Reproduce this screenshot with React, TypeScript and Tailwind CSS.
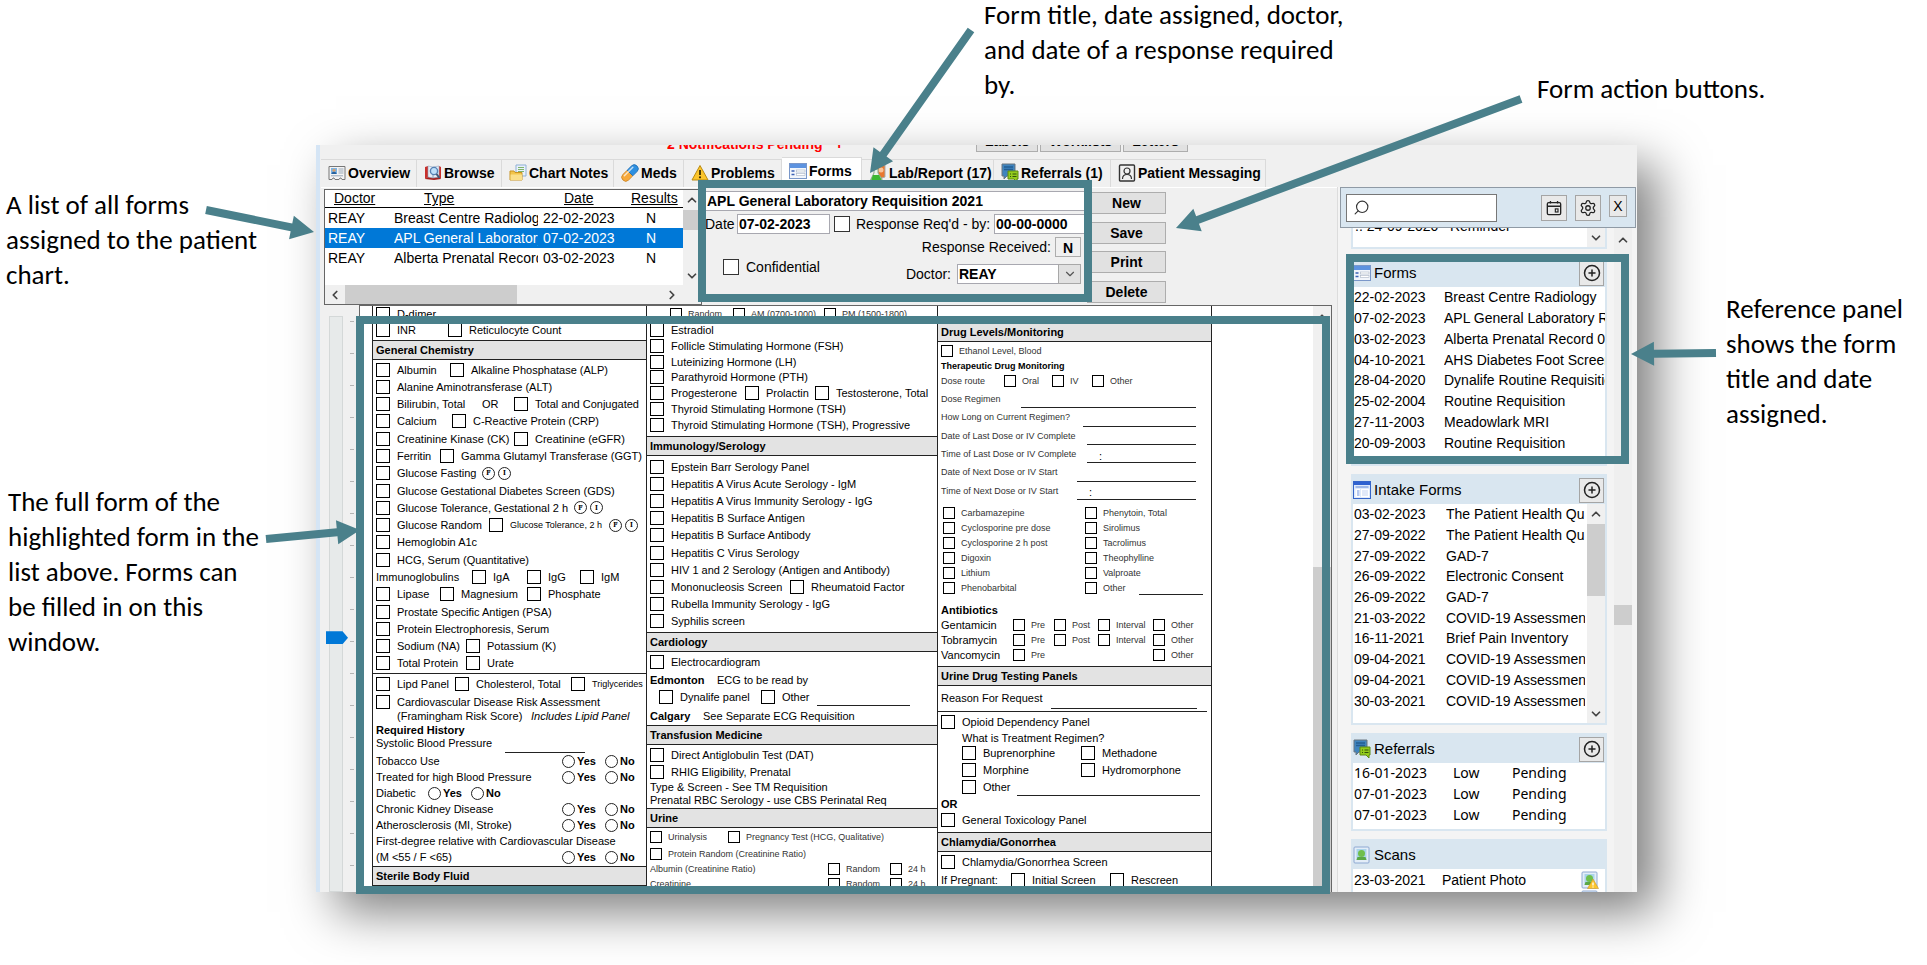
import type { ReactNode } from 'react';
import { ChevronDown, ChevronLeft, ChevronRight, ChevronUp, CirclePlus, Search, Settings } from 'lucide-react';
import clsx from 'clsx';

interface BoxProps {
  children: ReactNode;
  w?: string;
  small?: boolean;
}

/* ---------- icons ---------- */

function IconOverview() {
  return (
    <svg viewBox="0 0 18 18" className="size-[18px] shrink-0">
      <path d="M1 2.500h16v13h-3l-1-1.500h-1l-1 1.500h-4l-1-1.500h-1l-1 1.500h-3z" fill="#f4f4f4" stroke="#777" />
      <rect x="3" y="4" width="6" height="6" fill="#7db4e4" />
      <circle cx="6" cy="6.200" r="1.500" fill="#d99e68" />
      <path d="M3.500 10c0-3 5-3 5 0z" fill="#2762a0" />
      <path d="M10.500 5h5M10.500 7h5M10.500 9h5M3 11.800h12" stroke="#9aa9b8" />
    </svg>
  );
}

function IconBrowse() {
  return (
    <svg viewBox="0 0 18 18" className="size-[18px] shrink-0">
      <path d="M1 3l3-1v11l-3 2zM17 3l-2-1v11l2 2z" fill="#c9302c" />
      <path d="M1 15l3-2h11l2 2-7 1z" fill="#a61f1c" />
      <path d="M4 2l5 1v11l-5-1zM15 2l-6 1v11l6-1z" fill="#e6edf6" stroke="#8fa3bd" strokeWidth=".6" />
      <circle cx="10" cy="7" r="3.600" fill="#bfe0fa" stroke="#5682b4" strokeWidth="1.400" />
      <path d="M12.500 10l3 4" stroke="#425a78" strokeWidth="2" />
    </svg>
  );
}

function IconNotes() {
  return (
    <svg viewBox="0 0 18 18" className="size-[18px] shrink-0">
      <path d="M7 1h10v11H7z" fill="#e8f1fb" stroke="#8fb0d6" />
      <path d="M9 3.500h6M9 5.500h6M9 7.500h6" stroke="#7fb36b" />
      <path d="M1 7h4l1 1.500h7V16H1z" fill="#f3c54a" stroke="#c99525" />
      <path d="M1.500 10.500h11.500V16H1.500z" fill="#fbe08a" />
    </svg>
  );
}

function IconMeds() {
  return (
    <svg viewBox="0 0 18 18" className="size-[18px] shrink-0">
      <g transform="rotate(-45 9 9)">
        <path d="M3 5h6v8H3a4 4 0 0 1 0-8z" fill="#f7a93b" stroke="#c77d1b" strokeWidth=".7" />
        <path d="M9 5h6a4 4 0 0 1 0 8H9z" fill="#2d8fe0" stroke="#1c68ab" strokeWidth=".7" />
        <path d="M3 7h12" stroke="#fff" strokeOpacity=".7" strokeWidth="1.500" strokeLinecap="round" />
      </g>
    </svg>
  );
}

function IconWarning() {
  return (
    <svg viewBox="0 0 18 18" className="size-[18px] shrink-0">
      <path d="M9 1.500l8 14.500H1z" fill="#fcc52c" stroke="#b98a12" strokeLinejoin="round" />
      <path d="M9 6v5" stroke="#3a2c00" strokeWidth="1.800" />
      <circle cx="9" cy="13.300" r="1.100" fill="#3a2c00" />
    </svg>
  );
}

function IconForms() {
  return (
    <svg viewBox="0 0 18 16" className="h-4 w-[18px] shrink-0">
      <rect x=".5" y=".5" width="17" height="15" fill="#f2f6fc" stroke="#7a97c9" />
      <rect x="1" y="1" width="16" height="4" fill="#5d93e0" />
      <path d="M2.500 8h3M2.500 11.500h3" stroke="#3c62b5" strokeWidth="1.300" />
      <rect x="7.500" y="7" width="8.500" height="2" fill="#fff" stroke="#a9b4c4" strokeWidth=".6" />
      <rect x="7.500" y="10.500" width="8.500" height="2" fill="#fff" stroke="#a9b4c4" strokeWidth=".6" />
    </svg>
  );
}

function IconIntake() {
  return (
    <svg viewBox="0 0 18 18" className="size-[18px] shrink-0">
      <rect x=".5" y=".5" width="17" height="17" fill="#dfeafb" stroke="#3565c9" />
      <rect x="1" y="1" width="16" height="3" fill="#2f62d0" />
      <path d="M2.500 6h13" stroke="#8aa9e3" strokeWidth="1.500" />
      <rect x="2.500" y="8" width="4.500" height="8" fill="#fff" />
      <rect x="8" y="8" width="8" height="8" fill="#fff" />
      <path d="M4 10h2.500M4 12h2.500M4 14h2.500" stroke="#6f94e0" strokeWidth="1.200" />
      <path d="M9 10h6M9 12h6M9 14h6" stroke="#c3d3f2" />
    </svg>
  );
}

function IconLab() {
  return (
    <svg viewBox="0 0 18 18" className="size-[18px] shrink-0">
      <path d="M8 3l8-2v12l-6 2z" fill="#e8772e" stroke="#a9a9a9" />
      <circle cx="12" cy="6" r="2.500" fill="#f7c39a" />
      <path d="M5 5h4v4l4 6c0 2-1 2.500-2 2.500H3c-1.500 0-2-1-1-2.500l3-6z" fill="#e9f3e9" stroke="#8aa58a" />
      <path d="M4 11h6l2.500 4.500c0 1-.5 1.500-1.500 1.500H3.500C2 17 2 16 2.500 15z" fill="#3cb832" />
    </svg>
  );
}

function IconReferrals() {
  return (
    <svg viewBox="0 0 18 20" className="h-5 w-[18px] shrink-0">
      <path d="M1 1h13v12H6l-3 3v-3H1z" fill="#3f84bf" stroke="#6b7780" />
      <path d="M3 4h9M3 6.500h9" stroke="#235e93" strokeWidth="1.300" />
      <path d="M7 8h10v8h-1v3l-3-3H7z" fill="#93cc1c" stroke="#5f8a10" />
      <path d="M9 11h1M9 13.500h1M11.500 11h4M11.500 13.500h4" stroke="#33500a" strokeWidth="1.200" />
    </svg>
  );
}

function IconPerson() {
  return (
    <svg viewBox="0 0 18 18" className="size-[18px] shrink-0">
      <rect x="1.500" y="1" width="15" height="16" rx="1" fill="none" stroke="#333" strokeWidth="1.400" />
      <circle cx="9" cy="7" r="3" fill="none" stroke="#333" strokeWidth="1.200" />
      <path d="M4.500 15c0-6 9-6 9 0" fill="none" stroke="#333" strokeWidth="1.200" />
    </svg>
  );
}

function IconScan({ warn }: { warn?: boolean }) {
  return (
    <svg viewBox="0 0 18 18" className="size-[18px] shrink-0">
      <rect x="1" y="1" width="15" height="16" rx="1" fill="#e3edf8" stroke="#8ea9d2" />
      <rect x="3.500" y="3" width="10" height="11" fill="#a9d3ea" />
      <circle cx="8.500" cy="7.500" r="3.500" fill="#6fbf4c" />
      <path d="M3.500 14l1-3h8l1 3z" fill="#5aa845" />
      {warn && (
        <g>
          <path d="M12 8l5.500 9.500h-11z" fill="#fcc52c" stroke="#c9972a" strokeWidth=".6" />
          <path d="M12 11.500v3M12 15.500v1" stroke="#fff" strokeWidth="1.300" />
        </g>
      )}
    </svg>
  );
}

function IconCalendar() {
  return (
    <svg viewBox="0 0 18 18" className="size-4" fill="none" stroke="#222" strokeWidth="1.500">
      <rect x="1.500" y="3" width="15" height="13.500" rx="1.500" />
      <path d="M1.500 7h15M5 1v3M13 1v3" />
      <rect x="10.500" y="10" width="3" height="3.500" strokeWidth="1.300" />
    </svg>
  );
}

/* ---------- requisition parts ---------- */

function Box({ children, w, small }: BoxProps) {
  return (
    <label className={clsx('flex shrink-0 items-center', w, small ? 'gap-1.5 text-[9px] text-[#333]' : 'gap-[7px]')}>
      <input
        type="checkbox"
        className={clsx('shrink-0 appearance-none border border-black bg-white checked:bg-black', small ? 'size-3' : 'size-3.5')}
      />
      {children}
    </label>
  );
}

function Row({ children, h = 'flex-1', className }: { children: ReactNode; h?: string; className?: string }) {
  return <div className={clsx('flex min-h-0 items-center pl-[3px]', h, className)}>{children}</div>;
}

function SectionHead({ children }: { children: ReactNode }) {
  return (
    <h3 className="flex h-5 shrink-0 items-center border-y border-[#222] bg-[#e3e3e3] pl-[3px] text-[11px] font-bold">{children}</h3>
  );
}

function Line({ label, w, value }: { label: string; w: string; value?: string }) {
  return (
    <input
      aria-label={label}
      defaultValue={value}
      className={clsx('h-3.5 shrink-0 self-end border-b border-[#222] bg-transparent px-3 text-[11px] text-black outline-none', w)}
    />
  );
}

function Mark({ children }: { children: ReactNode }) {
  return (
    <span className="flex size-[13px] items-center justify-center rounded-full border border-[#222] font-serif text-[8px] font-bold">
      {children}
    </span>
  );
}

function YesNo({ label, w = 'w-[186px]' }: { label: string; w?: string }) {
  return (
    <Row h="h-4">
      <span className={clsx('shrink-0', w)}>{label}</span>
      {['Yes', 'No'].map((answer) => (
        <label key={answer} className="flex w-[43px] shrink-0 items-center gap-0.5 font-bold">
          <input
            type="radio"
            name={label}
            className="size-[13px] appearance-none rounded-full border border-[#222] bg-white checked:border-4"
          />
          {answer}
        </label>
      ))}
    </Row>
  );
}

function ColumnOne() {
  return (
    <div className="flex w-[274px] shrink-0 flex-col border-l border-[#222]">
      <div className="flex h-[34px] shrink-0 flex-col pb-0.5">
        <Row><Box>D-dimer</Box></Row>
        <Row><Box w="w-[72px]">INR</Box><Box>Reticulocyte Count</Box></Row>
      </div>
      <SectionHead>General Chemistry</SectionHead>
      <div className="flex h-[313px] shrink-0 flex-col py-px">
        <Row><Box w="w-[74px]">Albumin</Box><Box>Alkaline Phosphatase (ALP)</Box></Row>
        <Row><Box>Alanine Aminotransferase (ALT)</Box></Row>
        <Row><Box w="w-[106px]">Bilirubin, Total</Box><span className="w-8">OR</span><Box>Total and Conjugated</Box></Row>
        <Row><Box w="w-[76px]">Calcium</Box><Box>C-Reactive Protein (CRP)</Box></Row>
        <Row><Box w="w-[138px]">Creatinine Kinase (CK)</Box><Box>Creatinine (eGFR)</Box></Row>
        <Row><Box w="w-[64px]">Ferritin</Box><Box>Gamma Glutamyl Transferase (GGT)</Box></Row>
        <Row className="gap-[3px]"><Box w="w-[103px]">Glucose Fasting</Box><Mark>F</Mark><Mark>I</Mark></Row>
        <Row><Box>Glucose Gestational Diabetes Screen (GDS)</Box></Row>
        <Row className="gap-[3px]"><Box w="w-[195px]">Glucose Tolerance, Gestational 2 h</Box><Mark>F</Mark><Mark>I</Mark></Row>
        <Row className="gap-[3px]">
          <Box w="w-[110px]">Glucose Random</Box>
          <Box w="w-[117px]"><span className="text-[9px]">Glucose Tolerance, 2 h</span></Box>
          <Mark>F</Mark><Mark>I</Mark>
        </Row>
        <Row><Box>Hemoglobin A1c</Box></Row>
        <Row><Box>HCG, Serum (Quantitative)</Box></Row>
        <Row><span className="w-24">Immunoglobulins</span><Box w="w-[55px]">IgA</Box><Box w="w-[53px]">IgG</Box><Box>IgM</Box></Row>
        <Row><Box w="w-[64px]">Lipase</Box><Box w="w-[87px]">Magnesium</Box><Box>Phosphate</Box></Row>
        <Row><Box>Prostate Specific Antigen (PSA)</Box></Row>
        <Row><Box>Protein Electrophoresis, Serum</Box></Row>
        <Row><Box w="w-[90px]">Sodium (NA)</Box><Box>Potassium (K)</Box></Row>
        <Row><Box w="w-[90px]">Total Protein</Box><Box>Urate</Box></Row>
      </div>
      <div className="shrink-0 border-t border-[#222] pb-px">
        <Row h="h-5">
          <Box w="w-[79px]">Lipd Panel</Box><Box w="w-[116px]">Cholesterol, Total</Box>
          <Box><span className="text-[9px]">Triglycerides</span></Box>
        </Row>
        <Row h="h-4"><Box>Cardiovascular Disease Risk Assessment</Box></Row>
        <Row h="h-3"><span className="ml-[21px] w-[134px]">(Framingham Risk Score)</span><i>Includes Lipid Panel</i></Row>
        <Row h="h-[15px]" className="font-bold">Required History</Row>
        <Row h="h-4"><span className="w-[129px] self-start">Systolic Blood Pressure</span><Line label="Systolic Blood Pressure" w="w-20" /></Row>
        <YesNo label="Tobacco Use" />
        <YesNo label="Treated for high Blood Pressure" />
        <YesNo label="Diabetic" w="w-[52px]" />
        <YesNo label="Chronic Kidney Disease" />
        <YesNo label="Atherosclerosis (MI, Stroke)" />
        <Row h="h-4">First-degree relative with Cardiovascular Disease</Row>
        <YesNo label="(M <55 / F <65)" />
      </div>
      <SectionHead>Sterile Body Fluid</SectionHead>
    </div>
  );
}

function ColumnTwo() {
  return (
    <div className="flex w-[291px] shrink-0 flex-col border-l border-[#222]">
      <div className="flex h-[130px] shrink-0 flex-col pb-[3px]">
        <Row className="ml-5"><Box small w="w-[63px]">Random</Box><Box small w="w-[91px]">AM (0700-1000)</Box><Box small>PM (1500-1800)</Box></Row>
        <Row><Box>Estradiol</Box></Row>
        <Row><Box>Follicle Stimulating Hormone (FSH)</Box></Row>
        <Row><Box>Luteinizing Hormone (LH)</Box></Row>
        <Row><Box>Parathyroid Hormone (PTH)</Box></Row>
        <Row><Box w="w-[95px]">Progesterone</Box><Box w="w-[70px]">Prolactin</Box><Box>Testosterone, Total</Box></Row>
        <Row><Box>Thyroid Stimulating Hormone (TSH)</Box></Row>
        <Row><Box>Thyroid Stimulating Hormone (TSH), Progressive</Box></Row>
      </div>
      <SectionHead>Immunology/Serology</SectionHead>
      <div className="flex h-[176px] shrink-0 flex-col py-0.5">
        <Row><Box>Epstein Barr Serology Panel</Box></Row>
        <Row><Box>Hepatitis A Virus Acute Serology - IgM</Box></Row>
        <Row><Box>Hepatitis A Virus Immunity Serology - IgG</Box></Row>
        <Row><Box>Hepatitis B Surface Antigen</Box></Row>
        <Row><Box>Hepatitis B Surface Antibody</Box></Row>
        <Row><Box>Hepatitis C Virus Serology</Box></Row>
        <Row><Box>HIV 1 and 2 Serology (Antigen and Antibody)</Box></Row>
        <Row><Box w="w-[140px]">Mononucleosis Screen</Box><Box>Rheumatoid Factor</Box></Row>
        <Row><Box>Rubella Immunity Serology - IgG</Box></Row>
        <Row><Box>Syphilis screen</Box></Row>
      </div>
      <SectionHead>Cardiology</SectionHead>
      <Row h="h-5"><Box>Electrocardiogram</Box></Row>
      <Row h="h-4"><b className="w-[67px]">Edmonton</b>ECG to be read by</Row>
      <Row h="h-[18px]">
        <span className="w-[9px]" />
        <Box w="w-[102px]">Dynalife panel</Box><Box w="w-[56px]">Other</Box><Line label="ECG read by other" w="w-[93px]" />
      </Row>
      <Row h="h-[19px]"><b className="w-[53px]">Calgary</b>See Separate ECG Requisition</Row>
      <SectionHead>Transfusion Medicine</SectionHead>
      <Row h="h-5"><Box>Direct Antiglobulin Test (DAT)</Box></Row>
      <Row h="h-3.5"><Box>RHIG Eligibility, Prenatal</Box></Row>
      <Row h="h-[15px]">Type &amp; Screen - See TM Requisition</Row>
      <Row h="h-3.5" className="pb-0.5">Prenatal RBC Serology - use CBS Perinatal Req</Row>
      <SectionHead>Urine</SectionHead>
      <Row h="h-[18px]"><Box small w="w-[78px]">Urinalysis</Box><Box small>Pregnancy Test (HCG, Qualitative)</Box></Row>
      <Row h="h-[15px]"><Box small>Protein Random (Creatinine Ratio)</Box></Row>
      {['Albumin (Creatinine Ratio)', 'Creatinine'].map((test) => (
        <Row key={test} h="h-[15px]" className="shrink-0 text-[9px] text-[#333]">
          <span className="w-[178px]">{test}</span>
          <Box small w="w-[62px]">Random</Box>
          <Box small>24 h</Box>
        </Row>
      ))}
    </div>
  );
}

const doseLines = [
  { label: 'Dose Regimen', gap: 'w-[80px]', line: 'w-[175px]' },
  { label: 'How Long on Current Regimen?', gap: 'w-[142px]', line: 'w-[113px]' },
  { label: 'Date of Last Dose or IV Complete', gap: 'w-[146px]', line: 'w-[109px]' },
  { label: 'Time of Last Dose or IV Complete', gap: 'w-[146px]', line: 'w-[109px]', value: ':' },
  { label: 'Date of Next Dose or IV Start', gap: 'w-[136px]', line: 'w-[119px]' },
  { label: 'Time of Next Dose or IV Start', gap: 'w-[136px]', line: 'w-[119px]', value: ':' },
];

const drugs = [
  ['Carbamazepine', 'Phenytoin, Total'],
  ['Cyclosporine pre dose', 'Sirolimus'],
  ['Cyclosporine 2 h post', 'Tacrolimus'],
  ['Digoxin', 'Theophylline'],
  ['Lithium', 'Valproate'],
  ['Phenobarbital', 'Other'],
];

function ColumnThree() {
  return (
    <div className="flex w-[275px] shrink-0 flex-col border-x border-[#222]">
      <div className="h-4 shrink-0" />
      <SectionHead>Drug Levels/Monitoring</SectionHead>
      <div className="shrink-0 text-[9px] text-[#333]">
        <Row h="h-[18px]"><Box small>Ethanol Level, Blood</Box></Row>
        <Row h="h-3" className="font-bold text-black">Therapeutic Drug Monitoring</Row>
        <Row h="h-[18px]">
          <span className="w-[63px]">Dose route</span>
          <Box small w="w-12">Oral</Box><Box small w="w-10">IV</Box><Box small>Other</Box>
        </Row>
        <div className="flex h-[110px] flex-col">
          {doseLines.map((d) => (
            <Row key={d.label}>
              <span className={clsx('shrink-0', d.gap)}>{d.label}</span>
              <Line label={d.label} w={d.line} value={d.value} />
            </Row>
          ))}
        </div>
        <div className="pt-[5px] pb-px">
          {drugs.map(([left, right]) => (
            <Row key={left} h="h-[15px]" className="ml-0.5">
              <Box small w="w-[142px]">{left}</Box>
              <Box small w="w-[54px]">{right}</Box>
              {right === 'Other' && <Line label="Other drug" w="w-16" />}
            </Row>
          ))}
        </div>
      </div>
      <div className="shrink-0 pt-1.5 pb-1">
        <Row h="h-[15px]" className="font-bold">Antibiotics</Row>
        {['Gentamicin', 'Tobramycin', 'Vancomycin'].map((name) => (
          <Row key={name} h="h-[15px]">
            <span className="w-[72px]">{name}</span>
            <Box small w="w-[41px]">Pre</Box>
            {name === 'Vancomycin' ? (
              <span className="w-[99px]" />
            ) : (
              <><Box small w="w-[44px]">Post</Box><Box small w="w-[55px]">Interval</Box></>
            )}
            <Box small>Other</Box>
          </Row>
        ))}
      </div>
      <SectionHead>Urine Drug Testing Panels</SectionHead>
      <Row h="h-[23px]"><span className="w-[110px]">Reason For Request</span><Line label="Reason For Request" w="w-[146px]" /></Row>
      <div className="mt-0.5 mr-1 border-t border-[#222]" />
      <Row h="h-5"><Box>Opioid Dependency Panel</Box></Row>
      <Row h="h-3"><span className="ml-[21px]">What is Treatment Regimen?</span></Row>
      <div className="shrink-0 pl-[21px]">
        <Row h="h-[17px]"><Box w="w-[119px]">Buprenorphine</Box><Box>Methadone</Box></Row>
        <Row h="h-[17px]"><Box w="w-[119px]">Morphine</Box><Box>Hydromorphone</Box></Row>
        <Row h="h-[18px]"><Box w="w-[55px]">Other</Box><Line label="Other treatment" w="w-[183px]" /></Row>
      </div>
      <Row h="h-4" className="font-bold">OR</Row>
      <Row h="h-5" className="pb-1"><Box>General Toxicology Panel</Box></Row>
      <SectionHead>Chlamydia/Gonorrhea</SectionHead>
      <Row h="h-5"><Box>Chlamydia/Gonorrhea Screen</Box></Row>
      <Row h="h-4"><span className="w-[70px]">If Pregnant:</span><Box w="w-[99px]">Initial Screen</Box><Box>Rescreen</Box></Row>
    </div>
  );
}

/* ---------- chart window ---------- */

const tabs = [
  { label: 'Overview', icon: IconOverview, w: 'w-24' },
  { label: 'Browse', icon: IconBrowse, w: 'w-[85px]' },
  { label: 'Chart Notes', icon: IconNotes, w: 'w-28' },
  { label: 'Meds', icon: IconMeds, w: 'w-[70px]' },
  { label: 'Problems', icon: IconWarning, w: 'w-[98px]' },
  { label: 'Forms', icon: IconForms, w: 'w-20', active: true },
  { label: 'Lab/Report (17)', icon: IconLab, w: 'w-[132px]' },
  { label: 'Referrals (1)', icon: IconReferrals, w: 'w-[117px]' },
  { label: 'Patient Messaging', icon: IconPerson, w: 'w-[155px]' },
];

const assigned = [
  { type: 'Breast Centre Radiology', date: '22-02-2023' },
  { type: 'APL General Laboratory', date: '07-02-2023', selected: true },
  { type: 'Alberta Prenatal Record', date: '03-02-2023' },
];

const chevron = 'size-3.5 text-[#444]';

function FormList() {
  return (
    <div className="ml-[3px] flex h-[116px] w-[378px] shrink-0 flex-col border border-[#666] bg-white text-sm">
      <div className="flex h-[95px]">
        <div className="min-w-0 flex-1 overflow-hidden">
          <table className="w-full table-fixed border-collapse whitespace-nowrap">
            <thead>
              <tr className="h-[17px] border-b border-black text-left leading-4 underline">
                <th className="w-[65px] pl-[9px] font-normal">Doctor</th>
                <th className="w-[148px] pl-[34px] font-normal">Type</th>
                <th className="w-[90px] pl-[26px] font-normal">Date</th>
                <th className="pl-[3px] font-normal">Results</th>
              </tr>
            </thead>
            <tbody>
              {assigned.map((row) => (
                <tr key={row.date} className={clsx('h-5 leading-5', row.selected && 'bg-[#0078d7] text-white')}>
                  <td className="pl-[3px]">REAY</td>
                  <td className="pl-1"><div className="w-36 overflow-hidden">{row.type}</div></td>
                  <td className="pl-[5px]">{row.date}</td>
                  <td className="pl-[18px]">N</td>
                </tr>
              ))}
            </tbody>
          </table>
        </div>
        <div className="flex w-[18px] flex-col items-center bg-[#f0f0f0]">
          <ChevronUp className={clsx(chevron, 'my-[3px]')} strokeWidth={3} />
          <div className="h-5 w-full bg-[#cdcdcd]" />
          <ChevronDown className={clsx(chevron, 'mt-auto mb-0.5')} strokeWidth={3} />
        </div>
      </div>
      <div className="flex flex-1 items-center bg-[#f0f0f0] pr-[22px]">
        <ChevronLeft className={clsx(chevron, 'mx-[3px]')} strokeWidth={3} />
        <div className="h-full w-[172px] bg-[#cdcdcd]" />
        <ChevronRight className={clsx(chevron, 'ml-auto')} strokeWidth={3} />
      </div>
    </div>
  );
}

const field = 'h-5 border border-[#a8a8b0] bg-white px-px font-bold outline-none';

function FormDetails() {
  return (
    <div className="relative w-[385px] shrink-0 pt-0.5 pl-[3px] text-sm">
      <input aria-label="Form title" defaultValue="APL General Laboratory Requisition 2021" className={clsx(field, 'block w-full')} />
      <div className="mt-[3px] flex items-center">
        <label htmlFor="assigned" className="w-8">Date</label>
        <input id="assigned" defaultValue="07-02-2023" className={clsx(field, 'w-[93px]')} />
        <label className="ml-1 flex items-center gap-1.5">
          <input type="checkbox" className="size-4 appearance-none border border-[#333] bg-white checked:bg-[#333]" />
          Response Req&apos;d - by:
        </label>
        <input aria-label="Response required by" defaultValue="00-00-0000" className={clsx(field, 'ml-auto w-[93px]')} />
      </div>
      <div className="mt-[3px] flex items-center justify-end gap-1 pr-1.5">
        <span>Response Received:</span>
        <button className="h-5 w-[26px] border border-[#adadad] bg-[#f0f0f0] font-bold">N</button>
      </div>
      <div className="flex items-center pr-1.5 pl-[18px]">
        <label className="mb-2.5 flex items-center gap-[7px]">
          <input type="checkbox" className="size-4 appearance-none border border-[#333] bg-white checked:bg-[#333]" />
          Confidential
        </label>
        <label htmlFor="doctor" className="mt-1 ml-auto">Doctor:</label>
        <div className="relative mt-1 ml-1.5 w-[124px]">
          <select id="doctor" className="h-5 w-full appearance-none border border-[#a8a8b0] bg-white px-px text-sm leading-4 font-bold outline-none">
            <option>REAY</option>
          </select>
          <span className="pointer-events-none absolute inset-y-0 right-0 flex w-[23px] items-center justify-center border border-[#a8a8a8] bg-[#e1e1e1]">
            <ChevronDown className="size-3.5 text-[#555]" />
          </span>
        </div>
      </div>
      <div className="pointer-events-none absolute -top-[9px] -left-1 z-10 h-[122px] w-[394px] border-8 border-[#4a808b]" />
    </div>
  );
}

function FormViewer() {
  return (
    <div className="flex min-h-0 flex-1">
      <div className="relative flex w-[38px] shrink-0 justify-between overflow-hidden pt-[11px] pr-[5px] pl-2">
        <div className="w-3.5 border border-[#d4d8d8] bg-[#e7eaea]" />
        <div className="flex flex-col gap-[31px] pt-[5px]">
          {Array.from({ length: 19 }, (_, i) => (
            <span key={i} className="h-px w-1 shrink-0 bg-[#b5b5b5]" />
          ))}
        </div>
        <input
          type="range"
          aria-label="Form position"
          defaultValue={56}
          className="absolute top-[11px] bottom-0 left-[5px] w-[22px] appearance-none bg-transparent [writing-mode:vertical-lr] [&::-webkit-slider-thumb]:h-[13px] [&::-webkit-slider-thumb]:w-[22px] [&::-webkit-slider-thumb]:appearance-none [&::-webkit-slider-thumb]:bg-[#0078d7] [&::-webkit-slider-thumb]:[clip-path:polygon(0_0,75%_0,100%_50%,75%_100%,0_100%)]"
        />
      </div>
      <div className="relative mr-[5px] min-w-0 flex-1">
        <div className="flex h-full overflow-hidden border-t border-r border-l border-[#666] bg-white text-[11px] leading-3 whitespace-nowrap">
          <div className="flex h-0 min-w-0 flex-1 pl-3">
            <div className="flex h-[587px] overflow-hidden">
              <ColumnOne />
              <ColumnTwo />
              <ColumnThree />
            </div>
          </div>
          <div className="flex w-[18px] flex-col items-center bg-[#f0f0f0]">
            <ChevronUp className={clsx(chevron, 'mt-1')} strokeWidth={3} />
            <div className="mt-[243px] w-full flex-1 bg-[#cdcdcd]" />
          </div>
        </div>
        <div className="pointer-events-none absolute top-[11px] right-0.5 -bottom-0.5 -left-[3px] z-10 border-8 border-[#4a808b]" />
      </div>
    </div>
  );
}

/* ---------- reference panel ---------- */

const formHistory = [
  ['22-02-2023', 'Breast Centre Radiology'],
  ['07-02-2023', 'APL General Laboratory Requisition 2021'],
  ['03-02-2023', 'Alberta Prenatal Record 09'],
  ['04-10-2021', 'AHS Diabetes Foot Screen'],
  ['28-04-2020', 'Dynalife Routine Requisition'],
  ['25-02-2004', 'Routine Requisition'],
  ['27-11-2003', 'Meadowlark MRI'],
  ['20-09-2003', 'Routine Requisition'],
];

const intakeHistory = [
  ['03-02-2023', 'The Patient Health Qu'],
  ['27-09-2022', 'The Patient Health Qu'],
  ['27-09-2022', 'GAD-7'],
  ['26-09-2022', 'Electronic Consent'],
  ['26-09-2022', 'GAD-7'],
  ['21-03-2022', 'COVID-19 Assessment'],
  ['16-11-2021', 'Brief Pain Inventory'],
  ['09-04-2021', 'COVID-19 Assessment'],
  ['09-04-2021', 'COVID-19 Assessment'],
  ['30-03-2021', 'COVID-19 Assessment'],
];

const squareButton = 'flex items-center justify-center border border-[#a5a5a5] bg-[#e9e9e9]';

function Card({ title, icon, add, children }: { title: string; icon: ReactNode; add?: boolean; children: ReactNode }) {
  return (
    <section className="shrink-0 border-2 border-[#d9e6f0] bg-white">
      <div className="flex h-7 items-center gap-[3px] bg-[#d9e6f0] pr-px text-[15px]">
        {icon}
        <h2>{title}</h2>
        {add && (
          <button aria-label={'Add to ' + title} className={clsx(squareButton, 'ml-auto size-[25px]')}>
            <CirclePlus className="size-[18px] text-[#222]" strokeWidth={2} />
          </button>
        )}
      </div>
      {children}
    </section>
  );
}

function HistoryTable({ rows, className, dateWidth }: { rows: string[][]; className: string; dateWidth: string }) {
  return (
    <table className={clsx('w-full table-fixed border-collapse whitespace-nowrap', className)}>
      <tbody>
        {rows.map(([date, name], i) => (
          <tr key={i}>
            <td className={clsx('pl-px', dateWidth)}>{date}</td>
            <td className="overflow-hidden">{name}</td>
          </tr>
        ))}
      </tbody>
    </table>
  );
}

function ReferencePanel() {
  return (
    <aside className="flex w-[300px] shrink-0 flex-col border-l border-[#dcdcdc] bg-[#f4f4f4] pl-0.5 text-sm">
      <div className="mr-px flex h-[41px] shrink-0 items-center border border-[#8f9aa5] bg-[#d9e6f0] pr-2 pl-[5px]">
        <label className="flex h-7 w-[151px] items-center border border-[#777] bg-white pl-1.5">
          <Search className="size-[17px] shrink-0 -scale-x-100 text-[#333]" strokeWidth={1.6} />
          <input type="search" aria-label="Search chart" className="min-w-0 flex-1 px-1 outline-none" />
        </label>
        <button aria-label="Calendar" className={clsx(squareButton, 'ml-auto size-[26px]')}><IconCalendar /></button>
        <button aria-label="Settings" className={clsx(squareButton, 'ml-2 size-[26px]')}>
          <Settings className="size-[18px] text-[#222]" strokeWidth={1.7} />
        </button>
        <button aria-label="Close panel" className={clsx(squareButton, 'mb-1 ml-2 h-[22px] w-[18px]')}>X</button>
      </div>
      <div className="flex min-h-0 flex-1 overflow-hidden">
        <div className="ml-[11px] flex w-64 shrink-0 flex-col gap-2">
          <div className="flex h-[21px] shrink-0 border-x-2 border-b-2 border-[#d9e6f0] bg-white">
            <div className="flex flex-1 items-start overflow-hidden pl-0.5">
              <span className="flex h-1 items-end leading-3">:: 24-09-2020 &nbsp; Reminder</span>
            </div>
            <div className="flex w-[18px] items-center justify-center bg-[#f0f0f0]">
              <ChevronDown className={chevron} strokeWidth={3} />
            </div>
          </div>
          <div className="relative shrink-0">
            <Card title="Forms" icon={<IconForms />} add>
              <div className="h-[177px]"><HistoryTable rows={formHistory} className="h-[166px]" dateWidth="w-[91px]" /></div>
            </Card>
            <div className="pointer-events-none absolute -top-[3px] -right-[22px] -left-[5px] z-10 h-[210px] border-8 border-[#4a808b]" />
          </div>
          <Card title="Intake Forms" icon={<IconIntake />} add>
            <div className="flex h-[219px]">
              <div className="min-w-0 flex-1 pr-0.5"><HistoryTable rows={intakeHistory} className="h-[207px]" dateWidth="w-[93px]" /></div>
              <div className="flex w-[18px] flex-col items-center bg-[#f0f0f0]">
                <ChevronUp className={clsx(chevron, 'my-[3px]')} strokeWidth={3} />
                <div className="h-[72px] w-full bg-[#cdcdcd]" />
                <ChevronDown className={clsx(chevron, 'mt-auto mb-0.5')} strokeWidth={3} />
              </div>
            </div>
          </Card>
          <Card title="Referrals" icon={<IconReferrals />} add>
            <div className="h-[66px] font-['Noto_Sans']">
              <table className="h-[62px] w-full table-fixed border-collapse leading-5">
                <tbody>
                  {['16-01-2023', '07-01-2023', '07-01-2023'].map((date, i) => (
                    <tr key={i}>
                      <td className="w-[100px] pl-px">{date}</td>
                      <td className="w-[59px]">Low</td>
                      <td>Pending</td>
                    </tr>
                  ))}
                </tbody>
              </table>
            </div>
          </Card>
          <Card title="Scans" icon={<IconScan />}>
            <div className="flex h-[21px] items-center pl-px">
              <span className="w-22">23-03-2021</span>
              <span className="flex-1">Patient Photo</span>
              <span className="mr-1.5"><IconScan warn /></span>
            </div>
            <div className="flex h-[21px] justify-end pr-1.5"><IconScan warn /></div>
          </Card>
        </div>
        <div className="ml-[7px] flex w-[18px] flex-col items-center bg-[#efefef]">
          <ChevronUp className={clsx(chevron, 'mt-[5px]')} strokeWidth={3} />
          <div className="mt-[358px] h-5 w-full bg-[#cdcdcd]" />
        </div>
      </div>
    </aside>
  );
}

function ChartWindow() {
  return (
    <main className="flex min-w-0 flex-1 flex-col border-l-4 border-[#d5e5f5] bg-[#f0f0f0] pl-px font-['Liberation_Sans',Arial,sans-serif] text-black shadow-[20px_20px_46px_rgba(0,0,0,0.5)]">
      <div className="h-3 shrink-0">
        <div className="flex h-[7px] items-end overflow-hidden text-sm leading-4 font-bold">
          <span className="flex w-[655px] gap-3 pl-[346px] text-[#ff0000]">
            <span>2 Notifications Pending</span>
            <span className="text-base leading-4">+</span>
          </span>
          <div className="flex gap-0.5">
            {['Labels', 'Worklists', 'Letters'].map((name) => (
              <button key={name} className="h-[22px] shrink-0 border border-[#adadad] bg-[#e1e1e1] px-2 leading-4">{name}</button>
            ))}
          </div>
        </div>
      </div>
      <nav className="flex h-[30px] shrink-0 items-end text-sm font-bold">
        {tabs.map(({ label, icon: Icon, w, active }) => (
          <button
            key={label}
            className={clsx(
              'flex items-center justify-start gap-0.5 border-t border-r border-[#dadada] pl-[7px] whitespace-nowrap',
              w,
              active ? 'h-[30px] bg-white pb-1' : 'h-7 pb-0.5',
            )}
          >
            <Icon />
            {label}
          </button>
        ))}
      </nav>
      <div className="flex min-h-0 flex-1">
        <div className="flex min-w-0 flex-1 flex-col border-t border-white">
          <div className="flex h-[117px] shrink-0 pt-px">
            <FormList />
            <FormDetails />
            <div className="flex w-[79px] flex-col justify-between pt-[3px] pb-0.5 text-sm font-bold">
              {['New', 'Save', 'Print', 'Delete'].map((name) => (
                <button key={name} className="h-[22px] border border-[#adadad] bg-[#e1e1e1]">{name}</button>
              ))}
            </div>
          </div>
          <FormViewer />
        </div>
        <ReferencePanel />
      </div>
    </main>
  );
}

/* ---------- annotations ---------- */

const arrows = [
  { from: [206, 210], to: [314, 232] },
  { from: [266, 539], to: [360, 530] },
  { from: [971, 30], to: [870, 173] },
  { from: [1521, 99], to: [1176, 228] },
  { from: [1716, 353], to: [1631, 354] },
];

function Arrow({ from, to }: { from: number[]; to: number[] }) {
  const length = Math.hypot(to[0] - from[0], to[1] - from[1]);
  const angle = (Math.atan2(to[1] - from[1], to[0] - from[0]) * 180) / Math.PI;
  const neck = length - 23;
  return (
    <path
      transform={`translate(${from[0]} ${from[1]}) rotate(${angle})`}
      d={`M0 -4H${neck}V-12L${length} 0L${neck} 12V4H0z`}
      fill="#4a808b"
    />
  );
}

function Callout({ lines, className }: { lines: string[]; className?: string }) {
  return (
    <p className={clsx('text-[27px] leading-[35px] whitespace-nowrap', className)}>
      {lines.map((line) => (
        <span key={line} className="block">{line}</span>
      ))}
    </p>
  );
}

export default function App() {
  return (
    <div className="relative flex h-screen flex-col overflow-hidden bg-white font-['Carlito','Lato',sans-serif] text-black">
      <header className="flex h-[145px] shrink-0 justify-end">
        <Callout className="-mt-[3px] w-[553px]" lines={['Form title, date assigned, doctor,', 'and date of a response required', 'by.']} />
        <Callout className="w-[390px] pt-[71px]" lines={['Form action buttons.']} />
      </header>
      <div className="flex min-h-0 flex-1 pb-[73px]">
        <aside className="w-[316px] shrink-0 pt-[42px] pl-1.5">
          <Callout lines={['A list of all forms', 'assigned to the patient', 'chart.']} />
          <Callout className="mt-48 pl-0.5" lines={['The full form of the', 'highlighted form in the', 'list above. Forms can', 'be filled in on this', 'window.']} />
        </aside>
        <ChartWindow />
        <aside className="w-[290px] shrink-0 pt-[146px] pl-[89px]">
          <Callout lines={['Reference panel', 'shows the form', 'title and date', 'assigned.']} />
        </aside>
      </div>
      <svg className="pointer-events-none absolute inset-0 z-20 h-full w-full">
        {arrows.map((a, i) => (
          <Arrow key={i} from={a.from} to={a.to} />
        ))}
      </svg>
    </div>
  );
}
